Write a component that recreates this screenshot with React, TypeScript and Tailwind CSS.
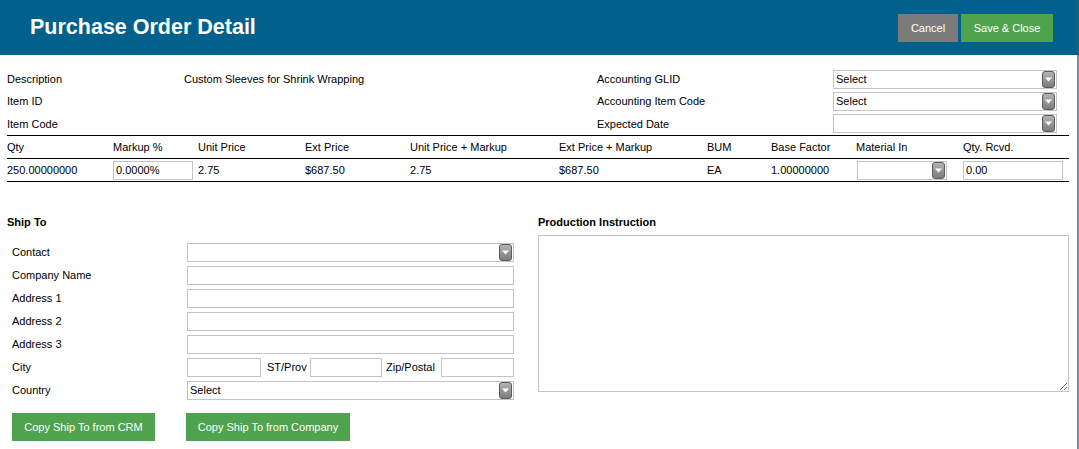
import React from 'react';

const SelectBox: React.FC<{ value?: string; className?: string }> = ({ value = '', className = '' }) => (
  <div className={`flex h-[19px] items-center justify-between border border-[#c4c4c4] bg-white pl-[2px] pr-px ${className}`}>
    <span className="truncate text-[11px] leading-none text-black">{value}</span>
    <span className="flex h-[17px] w-[13px] items-center justify-center rounded-[3px] border border-[#5a5a5a] bg-gradient-to-b from-[#b3b3b3] to-[#7c7c7c]">
      <svg width="7" height="5" viewBox="0 0 7 5">
        <path d="M0 0.5 H7 L3.5 4.5 Z" fill="#ffffff" />
      </svg>
    </span>
  </div>
);

const TextBox: React.FC<{ value?: string; className?: string }> = ({ value = '', className = '' }) => (
  <input
    readOnly
    value={value}
    className={`h-[19px] border border-[#c4c4c4] bg-white px-[2px] text-[11px] text-black outline-none ${className}`}
  />
);

const columns = [
  { label: 'Qty', width: 'w-[106px]' },
  { label: 'Markup %', width: 'w-[85px]' },
  { label: 'Unit Price', width: 'w-[107px]' },
  { label: 'Ext Price', width: 'w-[105px]' },
  { label: 'Unit Price + Markup', width: 'w-[149px]' },
  { label: 'Ext Price + Markup', width: 'w-[148px]' },
  { label: 'BUM', width: 'w-[64px]' },
  { label: 'Base Factor', width: 'w-[85px]' },
  { label: 'Material In', width: 'w-[107px]' },
  { label: 'Qty. Rcvd.', width: 'w-[106px]' },
];

const shipRows = ['Company Name', 'Address 1', 'Address 2', 'Address 3'];

export default function App() {
  return (
    <div className="flex min-h-[449px] w-[1079px] bg-white font-['Liberation_Sans',Arial,sans-serif] text-[11px] text-black">
      <div className="flex-1">
        {/* Header */}
        <div className="flex h-[55px] items-center justify-between bg-[#02608c] pl-[30px] pr-[24px]">
          <h1 className="text-[21.5px] font-bold text-white">Purchase Order Detail</h1>
          <div className="mt-px flex gap-[3px]">
            <button className="h-[28px] w-[60px] bg-[#7b7b7b] text-[11px] text-white">Cancel</button>
            <button className="h-[28px] w-[92px] bg-[#4fa34d] text-[11px] text-white">Save &amp; Close</button>
          </div>
        </div>

        <div className="pl-[7px] pr-[8px]">
          {/* Item info */}
          <div className="grid grid-cols-[177px_413px_236px_224px] grid-rows-[22px_22px_23px] items-center pt-[13px]">
            <span>Description</span>
            <span>Custom Sleeves for Shrink Wrapping</span>
            <span>Accounting GLID</span>
            <SelectBox value="Select" />
            <span>Item ID</span>
            <span />
            <span>Accounting Item Code</span>
            <SelectBox value="Select" />
            <span className="mt-px">Item Code</span>
            <span />
            <span className="mt-px">Expected Date</span>
            <SelectBox />
          </div>

          {/* Line grid */}
          <div className="border-t border-black">
            <div className="flex h-[23px] items-center border-b border-black">
              {columns.map((c) => (
                <span key={c.label} className={c.width}>
                  {c.label}
                </span>
              ))}
            </div>
            <div className="flex h-[23px] items-center border-b border-black">
              <span className="w-[106px]">250.00000000</span>
              <div className="w-[85px]">
                <TextBox value="0.0000%" className="w-[80px]" />
              </div>
              <span className="w-[107px]">2.75</span>
              <span className="w-[105px]">$687.50</span>
              <span className="w-[149px]">2.75</span>
              <span className="w-[148px]">$687.50</span>
              <span className="w-[64px]">EA</span>
              <span className="w-[85px]">1.00000000</span>
              <div className="w-[107px] pl-px">
                <SelectBox className="w-[90px]" />
              </div>
              <div className="w-[106px]">
                <TextBox value="0.00" className="w-[100px]" />
              </div>
            </div>
          </div>

          {/* Ship to + production instruction */}
          <div className="flex">
            <div className="w-[531px]">
              <h3 className="mt-[33px] h-[14px] font-bold leading-[14px]">Ship To</h3>
              <div className="mt-[12px] grid grid-cols-[175px_327px] auto-rows-[23px] items-center pl-[5px]">
                <span>Contact</span>
                <SelectBox />
                {shipRows.map((r) => (
                  <React.Fragment key={r}>
                    <span>{r}</span>
                    <TextBox className="w-full" />
                  </React.Fragment>
                ))}
                <span>City</span>
                <div className="flex items-center">
                  <TextBox className="w-[74px]" />
                  <span className="ml-[6px] w-[43px]">ST/Prov</span>
                  <TextBox className="w-[72px]" />
                  <span className="ml-[4px] w-[55px]">Zip/Postal</span>
                  <TextBox className="w-[73px]" />
                </div>
                <span>Country</span>
                <SelectBox value="Select" />
              </div>
              <div className="mt-[11px] flex pl-[5px]">
                <button className="h-[28px] w-[143px] bg-[#4fa34d] text-[11px] text-white">Copy Ship To from CRM</button>
                <button className="ml-[31px] h-[28px] w-[164px] bg-[#4fa34d] text-[11px] text-white">
                  Copy Ship To from Company
                </button>
              </div>
            </div>
            <div className="flex-1">
              <h3 className="mt-[33px] h-[14px] font-bold leading-[14px]">Production Instruction</h3>
              <textarea readOnly className="mt-[6px] block h-[157px] w-full border border-[#c4c4c4] outline-none" />
            </div>
          </div>
        </div>
      </div>

      {/* Window edge */}
      <div className="flex w-[2px] flex-col">
        <div className="h-[55px] bg-[#3a556b]" />
        <div className="flex-1 bg-[#7d8995]" />
      </div>
    </div>
  );
}
